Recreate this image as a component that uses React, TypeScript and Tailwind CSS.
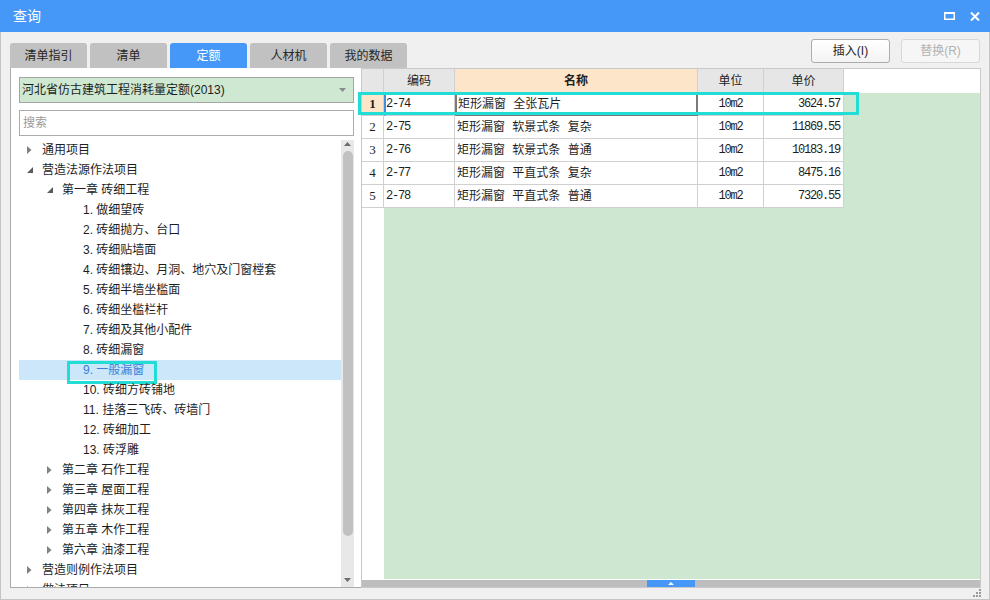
import React from "react"

type TreeNode = { label: string; level: number; state?: "open" | "closed"; selected?: boolean }

const tree: TreeNode[] = [
  { label: "通用项目", level: 0, state: "closed" },
  { label: "营造法源作法项目", level: 0, state: "open" },
  { label: "第一章 砖细工程", level: 1, state: "open" },
  { label: "1. 做细望砖", level: 2 },
  { label: "2. 砖细抛方、台口", level: 2 },
  { label: "3. 砖细贴墙面", level: 2 },
  { label: "4. 砖细镶边、月洞、地穴及门窗樘套", level: 2 },
  { label: "5. 砖细半墙坐槛面", level: 2 },
  { label: "6. 砖细坐槛栏杆", level: 2 },
  { label: "7. 砖细及其他小配件", level: 2 },
  { label: "8. 砖细漏窗", level: 2 },
  { label: "9. 一般漏窗", level: 2, selected: true },
  { label: "10. 砖细方砖铺地", level: 2 },
  { label: "11. 挂落三飞砖、砖墙门", level: 2 },
  { label: "12. 砖细加工", level: 2 },
  { label: "13. 砖浮雕", level: 2 },
  { label: "第二章 石作工程", level: 1, state: "closed" },
  { label: "第三章 屋面工程", level: 1, state: "closed" },
  { label: "第四章 抹灰工程", level: 1, state: "closed" },
  { label: "第五章 木作工程", level: 1, state: "closed" },
  { label: "第六章 油漆工程", level: 1, state: "closed" },
  { label: "营造则例作法项目", level: 0, state: "closed" },
  { label: "做法项目", level: 0, state: "closed" },
]

const rows = [
  ["1", "2-74", "矩形漏窗 全张瓦片", "10m2", "3624.57"],
  ["2", "2-75", "矩形漏窗 软景式条 复杂", "10m2", "11869.55"],
  ["3", "2-76", "矩形漏窗 软景式条 普通", "10m2", "10183.19"],
  ["4", "2-77", "矩形漏窗 平直式条 复杂", "10m2", "8475.16"],
  ["5", "2-78", "矩形漏窗 平直式条 普通", "10m2", "7320.55"],
]

const tabs = ["清单指引", "清单", "定额", "人材机", "我的数据"]

function Caret({ state }: { state?: "open" | "closed" }) {
  if (state === "closed")
    return (
      <svg width="5" height="8" viewBox="0 0 5 8">
        <polygon points="0,0 4.5,4 0,8" fill="#808080" />
      </svg>
    )
  if (state === "open")
    return (
      <svg width="6" height="6" viewBox="0 0 6 6">
        <polygon points="6,0 6,6 0,6" fill="#5a5a5a" />
      </svg>
    )
  return null
}

export default function App() {
  return (
    <div className="w-[990px] h-[600px] flex flex-col bg-[#f0f0f0] font-['Liberation_Sans','Noto_Sans_CJK_SC',sans-serif] text-[12px] text-[#1e1e1e] overflow-hidden">
      {/* title bar */}
      <div className="h-[32px] shrink-0 bg-[#4698f8] flex items-center justify-between pl-[13px] pr-[10px]">
        <span className="text-white text-[14px] leading-none">查询</span>
        <div className="flex items-center gap-[15px]">
          <svg width="11" height="8" viewBox="0 0 11 8">
            <rect x="0.75" y="1" width="9.5" height="6.25" fill="none" stroke="#fff" strokeWidth="1.5" />
            <rect x="0" y="0" width="11" height="2" fill="#fff" />
          </svg>
          <svg width="10" height="9" viewBox="0 0 10 9">
            <path d="M1 0.5 L9 8.5 M9 0.5 L1 8.5" stroke="#fff" strokeWidth="2" />
          </svg>
        </div>
      </div>

      <div className="flex-1 flex flex-col border-x border-b border-[#c4c4c4] pl-[9px] pr-[8px]">
        {/* tabs + buttons */}
        <div className="h-[36px] shrink-0 flex justify-between">
          <div className="self-end flex gap-[3px]">
            {tabs.map((t) => (
              <div
                key={t}
                className={
                  t === "定额"
                    ? "w-[77px] h-[25px] rounded-t-[3px] bg-[#4698f8] text-white flex items-center justify-center"
                    : "w-[77px] h-[25px] rounded-t-[3px] bg-[#c1c1c1] text-[#262626] flex items-center justify-center"
                }
              >
                {t}
              </div>
            ))}
          </div>
          <div className="pt-[7px] pr-[1px] flex gap-[11px]">
            <button className="w-[79px] h-[24px] rounded-[3px] border border-[#adadad] bg-gradient-to-b from-white to-[#f3f3f3] text-[#1e1e1e]">
              插入(I)
            </button>
            <button className="w-[79px] h-[24px] rounded-[3px] border border-[#d8d8d8] bg-[#f6f6f6] text-[#b2b2b2]">
              替换(R)
            </button>
          </div>
        </div>

        {/* main */}
        <div className="h-[520px] flex">
          {/* left panel */}
          <div className="w-[351px] shrink-0 bg-white border-l border-b border-[#ababab] flex flex-col pl-[8px] pr-[7px] pt-[9px]">
            <div className="h-[26px] shrink-0 border border-[#a5a5a5] bg-[#cfe8d2] flex items-center justify-between pl-[2px] pr-[7px]">
              <span>河北省仿古建筑工程消耗量定额(2013)</span>
              <svg width="7" height="4" viewBox="0 0 7 4">
                <polygon points="0,0 7,0 3.5,4" fill="#8a8a8a" />
              </svg>
            </div>
            <div className="h-[26px] shrink-0 mt-[7px] border border-[#acacac] bg-white flex items-center pl-[3px] text-[#9a9a9a]">
              搜索
            </div>
            <div className="flex-1 mt-[4px] flex min-h-0">
              <div className="flex-1 overflow-hidden">
                {tree.map((n) => (
                  <div
                    key={n.label}
                    className={
                      n.selected
                        ? "relative h-[20px] flex items-center bg-[#cce6fa] text-[#3b7fd6]"
                        : "relative h-[20px] flex items-center"
                    }
                    style={{ paddingLeft: 4 + n.level * 20 + (n.level === 2 ? 1 : 0) }}
                  >
                    <div className="w-[19px] h-[20px] flex items-center pl-[4px]">
                      <Caret state={n.state} />
                    </div>
                    <span className="leading-[20px] whitespace-nowrap">{n.label}</span>
                    {n.selected && (
                      <div className="absolute left-[48px] top-[1px] w-[90px] h-[23px] border-[3px] border-[#22ddd6]" />
                    )}
                  </div>
                ))}
              </div>
              {/* vertical scrollbar */}
              <div className="w-[13px] shrink-0 bg-[#e8e8e8] flex flex-col items-center pt-[2px] pb-[5px]">
                <svg width="7" height="4" viewBox="0 0 7 4">
                  <polygon points="3.5,0 7,4 0,4" fill="#6b6b6b" />
                </svg>
                <div className="mt-[5px] w-[10px] h-[385px] rounded-full bg-[#c1c1c1]" />
                <div className="flex-1" />
                <svg width="7" height="4" viewBox="0 0 7 4">
                  <polygon points="0,0 7,0 3.5,4" fill="#6b6b6b" />
                </svg>
              </div>
            </div>
          </div>

          {/* right panel */}
          <div className="relative flex-1 bg-white border border-[#c9c9c9] flex flex-col">
            <div className="h-[24px] shrink-0 flex">
              <div className="w-[22px] border-r border-b border-[#d0d0d0] bg-[#e6e6e6]" />
              <div className="w-[71px] border-r border-b border-[#d0d0d0] bg-[#e6e6e6] flex items-center justify-center">编码</div>
              <div className="w-[243px] border-r border-b border-[#d0d0d0] bg-[#fde5c9] flex items-center justify-center font-bold">名称</div>
              <div className="w-[66px] border-r border-b border-[#d0d0d0] bg-[#e6e6e6] flex items-center justify-center">单位</div>
              <div className="w-[80px] border-r border-b border-[#d0d0d0] bg-[#e6e6e6] flex items-center justify-center">单价</div>
            </div>
            <div className="flex-1 flex min-h-0">
              <div className="w-[22px] shrink-0 bg-white flex flex-col">
                {rows.map((r, i) => (
                  <div
                    key={r[0]}
                    className={
                      i === 0
                        ? "h-[23px] border-r border-b border-[#d0d0d0] bg-[#fde5c9] flex items-center justify-center font-['Liberation_Serif',serif] font-bold text-[13px]"
                        : "h-[23px] border-r border-b border-[#d0d0d0] flex items-center justify-center font-['Liberation_Serif',serif] text-[13px]"
                    }
                  >
                    {r[0]}
                  </div>
                ))}
              </div>
              <div className="flex-1 bg-[#cde7d0] flex flex-col">
                {rows.map((r, i) => (
                  <div key={r[0]} className="h-[23px] flex">
                    <div
                      className={
                        i === 0
                          ? "w-[71px] border-l-2 border-l-[#3d8fe0] border-r border-b border-[#d0d0d0] bg-white flex items-center pl-[0px] font-['Liberation_Mono',monospace] text-[12px] tracking-[-1.2px]"
                          : "w-[71px] border-r border-b border-[#d0d0d0] bg-white flex items-center pl-[2px] font-['Liberation_Mono',monospace] text-[12px] tracking-[-1.2px]"
                      }
                    >
                      {r[1]}
                    </div>
                    <div
                      className={
                        i === 0
                          ? "w-[243px] border-x-2 border-b-2 border-[#7a7a7a] bg-white flex items-center pl-[1px] [word-spacing:4px] whitespace-pre"
                          : "w-[243px] border-r border-b border-[#d0d0d0] bg-white flex items-center pl-[2px] [word-spacing:4px] whitespace-pre"
                      }
                    >
                      {r[2]}
                    </div>
                    <div className="w-[66px] border-r border-b border-[#d0d0d0] bg-white flex items-center justify-center font-['Liberation_Mono',monospace] text-[12px] tracking-[-1.2px]">
                      {r[3]}
                    </div>
                    <div className="w-[80px] border-r border-b border-[#d0d0d0] bg-white flex items-center justify-end pr-[3px] font-['Liberation_Mono',monospace] text-[12px] tracking-[-1.2px]">
                      {r[4]}
                    </div>
                  </div>
                ))}
              </div>
            </div>
            {/* horizontal scrollbar */}
            <div className="h-[7px] mt-[1px] shrink-0 bg-[#bdbdbd] flex justify-center">
              <div className="w-[48px] h-[7px] bg-[#4698f8] flex items-center justify-center">
                <svg width="6" height="3" viewBox="0 0 6 3">
                  <polygon points="3,0 6,3 0,3" fill="#fff" />
                </svg>
              </div>
            </div>
            {/* annotation box over the first row */}
            <div className="absolute left-[-4px] top-[23px] w-[501px] h-[23px] border-[3px] border-[#22ddd6]" />
          </div>
        </div>

        {/* bottom strip with resize grip */}
        <div className="flex-1 flex justify-end items-end pb-[2px]">
          <svg width="8" height="8" viewBox="0 0 8 8">
            <rect x="6" y="0" width="2" height="2" fill="#9a9a9a" />
            <rect x="3" y="3" width="2" height="2" fill="#9a9a9a" />
            <rect x="6" y="3" width="2" height="2" fill="#9a9a9a" />
            <rect x="0" y="6" width="2" height="2" fill="#9a9a9a" />
            <rect x="3" y="6" width="2" height="2" fill="#9a9a9a" />
            <rect x="6" y="6" width="2" height="2" fill="#9a9a9a" />
          </svg>
        </div>
      </div>
    </div>
  )
}
